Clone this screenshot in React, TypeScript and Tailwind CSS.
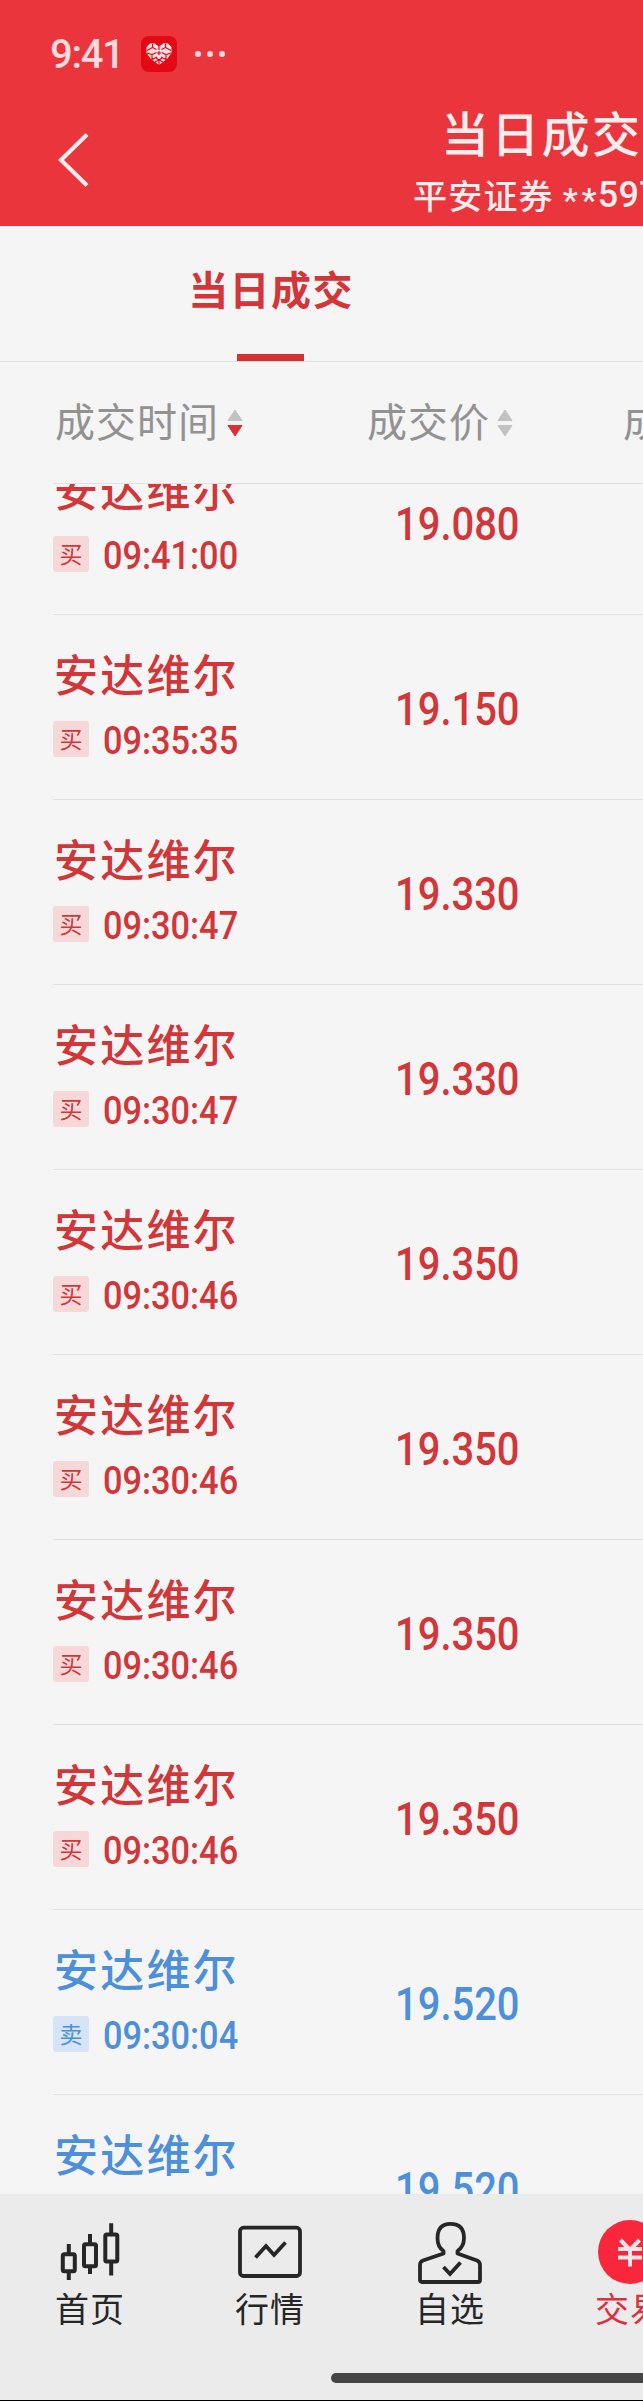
import clsx from "clsx";

type Side = "buy" | "sell";

const trades: { side: Side; time: string; price: string }[] = [
  { side: "buy", time: "09:41:00", price: "19.080" },
  { side: "buy", time: "09:35:35", price: "19.150" },
  { side: "buy", time: "09:30:47", price: "19.330" },
  { side: "buy", time: "09:30:47", price: "19.330" },
  { side: "buy", time: "09:30:46", price: "19.350" },
  { side: "buy", time: "09:30:46", price: "19.350" },
  { side: "buy", time: "09:30:46", price: "19.350" },
  { side: "buy", time: "09:30:46", price: "19.350" },
  { side: "sell", time: "09:30:04", price: "19.520" },
  { side: "sell", time: "09:30:04", price: "19.520" },
];

const navItems = [
  { label: "首页", icon: CandlesIcon },
  { label: "行情", icon: ChartIcon },
  { label: "自选", icon: PersonIcon },
  { label: "交易", icon: TradeIcon, active: true },
];

function CandlesIcon() {
  return (
    <svg width="64" height="64" viewBox="0 0 64 64" fill="none" stroke="#262626" strokeWidth="4">
      <rect x="4.8" y="34.3" width="12" height="17" rx="1.5" />
      <path d="M10.8 24v10M10.8 51v9" />
      <rect x="26" y="24.3" width="12" height="22" rx="1.5" />
      <path d="M32 14v10M32 46v8" />
      <rect x="47.3" y="14.6" width="12" height="27" rx="1.5" />
      <path d="M53.2 3.300v11M53.200 41.500v14" />
    </svg>
  );
}

function ChartIcon() {
  return (
    <svg width="64" height="64" viewBox="0 0 64 64" fill="none" stroke="#262626" strokeWidth="3.8">
      <rect x="2" y="7.7" width="60" height="48.3" rx="3.5" />
      <path d="M17.5 37.500L28 26l8 9 11.500-12.500" />
    </svg>
  );
}

function PersonIcon() {
  return (
    <svg width="64" height="64" viewBox="0 0 64 64" fill="none" stroke="#262626" strokeWidth="3.8" strokeLinejoin="round">
      <path d="M25.500 31C21 28 19.500 23.500 19.500 18C19.500 8.500 24 3.800 32.500 3.800S46 8.500 46 18c0 5.500-2 10-6.500 13v2.500l19.500 7q3 1.200 3 4.500v15q0 2-2 2H4q-2 0-2-2V45q0-3.300 3-4.500l20.500-7z" />
      <path d="M25.500 47l6.500 7L42.500 42.500" strokeLinejoin="miter" />
    </svg>
  );
}

function TradeIcon() {
  return (
    <svg width="64" height="64" viewBox="0 0 64 64" fill="none">
      <circle cx="32" cy="32" r="32" fill="#f9273b" />
      <path d="M22.500 20l9.500 10 9.500-10M20 29h24M20 37.500h24M32 29v17.500" stroke="#ffe4e6" strokeWidth="4" />
    </svg>
  );
}

function HeartIcon() {
  return (
    <svg width="28" height="24" viewBox="0 0 28 24">
      <path d="M14 23L5.500 16.500 1.500 11V5L5 1.500 9 1l5 3.500L19 1l4 .5L26.500 5v6l-4 5.500z" fill="#ffe0e2" />
      <path
        d="M7.500 1.500v4L2 8.500M7.500 5.500l4 2M20.500 1.500v4L26 8.500M20.500 5.500l-4 2M2 11l5 1.500 4.500-2M26 11l-5 1.500-4.500-2M7 12.500v5l5-2.500M21 12.500v5L16 15M14 4v4M11 16l3 2 3-2M14 18v5M10 20l4-2 4 2M12 11h4M14 9v4"
        fill="none"
        stroke="#e40814"
        strokeWidth="1.2"
      />
    </svg>
  );
}

function SortArrows({ active }: { active?: boolean }) {
  const down = active ? "#dc2f33" : "#c2c2c2";
  return (
    <svg width="16" height="28" viewBox="0 0 16 28">
      <path d="M8 1L15 11.500H1z" fill="#c2c2c2" stroke="#c2c2c2" strokeLinejoin="round" />
      <path d="M8 27L15 16.500H1z" fill={down} stroke={down} strokeLinejoin="round" />
    </svg>
  );
}

function TradeRow({ side, time, price }: { side: Side; time: string; price: string }) {
  const buy = side === "buy";
  return (
    <div
      className={clsx(
        "ml-[53px] flex h-[185px] shrink-0 border-b border-[#e1e1e1]",
        buy ? "text-[#d23639]" : "text-[#4c8fdb]"
      )}
    >
      <div className="w-[342px] pt-[28px]">
        <div className="pl-[1px] text-[44px] leading-[60px] font-medium tracking-[2.2px]">安达维尔</div>
        <div className="mt-[18px] flex h-9 items-center">
          <span
            className={clsx(
              "flex size-9 items-center justify-center rounded-[3px] pb-0.5 text-[23px] leading-[32px]",
              buy ? "bg-[#f6d8d9]" : "bg-[#d5e4f6]"
            )}
          >
            {buy ? "买" : "卖"}
          </span>
          <span className="ml-[14px] origin-left scale-x-[0.88] pt-[3px] font-[Roboto] text-[39px] leading-9 font-medium">{time}</span>
        </div>
      </div>
      <div className="origin-left scale-x-[0.868] pt-[66px] font-[Roboto] text-[46px] leading-[56px] font-medium">{price}</div>
    </div>
  );
}

export default function App() {
  return (
    <div className="h-[2401px] w-full overflow-hidden bg-[#f5f5f5] font-['Noto_Sans_CJK_SC',sans-serif] whitespace-nowrap">
      <div className="flex h-[2401px] w-[1080px] flex-col border-b border-black">
        {/* Header */}
        <header className="h-[226px] shrink-0 bg-[#e9353b]">
          <div className="flex h-[108px] items-center pl-[50px] text-[#ffd9db]">
            <span className="w-[91px] pt-px font-[Roboto] text-[40px] leading-[40px] font-medium tracking-[-1.3px]">9:41</span>
            <span className="flex size-9 items-center justify-center rounded-[8px] bg-[#e40814]">
              <HeartIcon />
            </span>
            <span className="ml-[18px] flex gap-1.5">
              <i className="size-1.5 rounded-full bg-current" />
              <i className="size-1.5 rounded-full bg-current" />
              <i className="size-1.5 rounded-full bg-current" />
            </span>
          </div>
          <div className="flex text-[#ffeced]">
            <button className="mt-6 ml-[56px] h-[56px] w-[34px]">
              <svg width="34" height="56" viewBox="0 0 34 56" fill="none" stroke="currentColor" strokeWidth="4.2">
                <path d="M31 2.500L5 28l26 25.500" />
              </svg>
            </button>
            <div className="-mt-[3px] ml-[323px]">
              <h1 className="ml-[28px] text-[48px] leading-[52px] font-medium tracking-[2.3px]">当日成交</h1>
              <p className="mt-[18px] flex text-[34px] leading-[40px] font-medium tracking-[1.2px]">
                平安证券
                <span className="ml-[8px] flex font-[Roboto]">
                  <span className="w-[36px] pt-[5px] pl-[1px] tracking-[3.5px]">**</span>
                  <span className="text-[36px] tracking-[0.3px]">597</span>
                </span>
              </p>
            </div>
          </div>
        </header>

        {/* Tabs */}
        <div className="flex h-[136px] shrink-0 border-b border-[#e0e0e0]">
          <div className="flex w-[540px] flex-col items-center justify-between pt-[34px] text-[#d23639]">
            <span className="pl-[2px] text-[40px] leading-[56px] font-bold tracking-[1.4px]">当日成交</span>
            <span className="h-[7px] w-[67px] bg-[#d72f32]" />
          </div>
        </div>

        {/* Column titles */}
        <div className="ml-[53px] flex h-[122px] shrink-0 items-center border-b border-[#e1e1e1] text-[40px] leading-[56px] tracking-[1px] text-[#929292]">
          <div className="flex w-[312px] items-center gap-[8px] pl-[2px]">
            <span className="-mt-[5px]">成交时间</span>
            <SortArrows active />
          </div>
          <div className="flex w-[258px] items-center gap-[7px] pl-[2px]">
            <span className="-mt-[5px]">成交价</span>
            <SortArrows />
          </div>
          <div className="-mt-[5px]">成</div>
        </div>

        {/* Trades */}
        <main className="flex-1 overflow-hidden">
          <div className="-mt-[54px] flex flex-col">
            {trades.map((trade, i) => (
              <TradeRow key={i} {...trade} />
            ))}
          </div>
        </main>

        {/* Bottom nav */}
        <nav className="flex h-[206px] shrink-0 flex-col bg-[#ebebeb]">
          <div className="flex pt-[26px]">
            {navItems.map((item) => (
              <div
                key={item.label}
                className={clsx("flex w-[180px] flex-col items-center", item.active ? "text-[#e02f40]" : "text-[#262626]")}
              >
                <item.icon />
                <span className="pt-px text-[34px] leading-[46px] tracking-[1px]">{item.label}</span>
              </div>
            ))}
          </div>
          <div className="mt-[42px] ml-[331px] h-[10px] w-[418px] rounded-full bg-[#454545]" />
        </nav>
      </div>
    </div>
  );
}
